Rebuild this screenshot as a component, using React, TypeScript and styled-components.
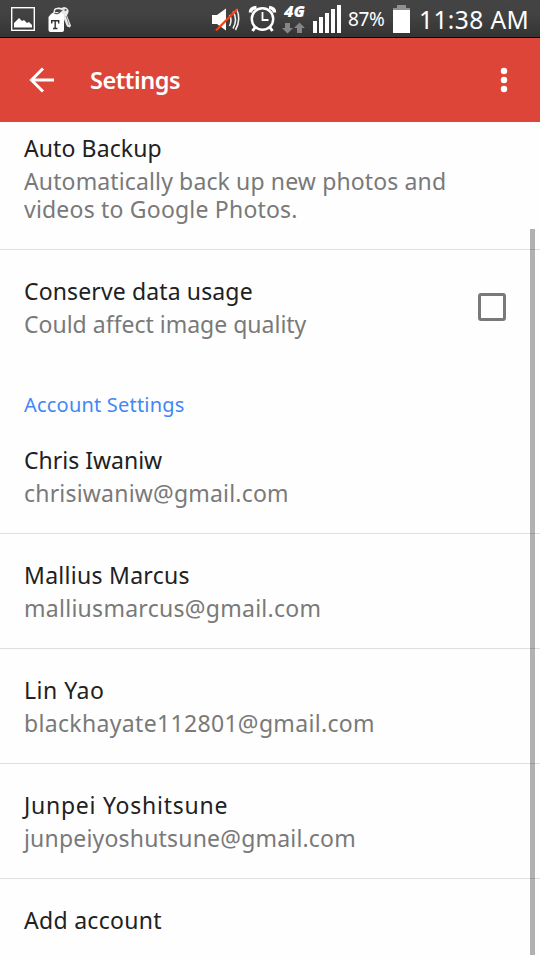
import React from "react";
import styled, { createGlobalStyle } from "styled-components";

const GlobalStyle = createGlobalStyle`
  * { box-sizing: border-box; }
  body { margin: 0; background: #fff; overflow: hidden; font-family: "Noto Sans", sans-serif; }
`;

const Screen = styled.div`
  position: relative;
  width: 540px;
  height: 960px;
  overflow: hidden;
  display: flex;
  flex-direction: column;
  background: #fefefe;
`;

const StatusBar = styled.header`
  flex: none;
  height: 38px;
  display: flex;
  justify-content: space-between;
  background: linear-gradient(#444 0, #424242 15px, #343434 37px);
  border-bottom: 1px solid #000;
  color: #fff;
`;

const StatusGroup = styled.div`
  display: flex;
`;

const StatusText = styled.span<{ $size: number; $width: number; $spacing: number }>`
  width: ${(p) => p.$width}px;
  font-size: ${(p) => p.$size}px;
  letter-spacing: ${(p) => p.$spacing}px;
  line-height: 39px;
  white-space: nowrap;
`;

const Toolbar = styled.div`
  flex: none;
  height: 84px;
  display: flex;
  align-items: center;
  background: #dd4538;
  color: #fff;
`;

const IconButton = styled.button<{ $width: number }>`
  width: ${(p) => p.$width}px;
  height: 84px;
  padding: 0;
  border: 0;
  background: none;
  display: flex;
  color: inherit;
`;

const Heading = styled.h1`
  flex: 1;
  margin: 0;
  font-size: 23.5px;
  font-weight: 600;
  line-height: 84px;
  letter-spacing: -0.45px;
`;

const List = styled.main`
  flex: 1;
  min-height: 0;
  overflow: hidden;
`;

const Row = styled.section<{ $top?: number; $divider?: boolean }>`
  display: flex;
  justify-content: space-between;
  padding: ${(p) => p.$top ?? 27}px 34px 26px 24px;
  border-bottom: ${(p) => (p.$divider ? "1px solid #dfdfdf" : "0")};
`;

const RowText = styled.div`
  display: flex;
  flex-direction: column;
  gap: 5px;
`;

const Line = styled.div<{ $spacing: number }>`
  font-size: 23px;
  line-height: 28px;
  letter-spacing: ${(p) => p.$spacing}px;
  white-space: nowrap;
`;

const Title = styled(Line)`
  color: #212121;
`;

const Summary = styled(Line)`
  color: #797979;
`;

const SectionLabel = styled.h2<{ $spacing: number }>`
  height: 55px;
  margin: 0;
  padding: 27px 24px 0;
  color: #4387f5;
  font-size: 20px;
  font-weight: 400;
  line-height: 28px;
  letter-spacing: ${(p) => p.$spacing}px;
`;

const Checkbox = styled.span`
  width: 28px;
  height: 28px;
  margin-top: 16px;
  border: 3px solid #797979;
  border-radius: 3px;
`;

const ScrollThumb = styled.div`
  position: absolute;
  top: 229px;
  right: 5px;
  width: 5px;
  height: 726px;
  background: rgba(0, 0, 0, 0.3);
`;

const NotificationIcons = () => (
  <svg width="80" height="37" viewBox="0 0 80 37">
    <rect x="11.7" y="7.7" width="22.6" height="22.6" fill="none" stroke="#fff" strokeWidth="1.4" />
    <path d="M14 27.500V23l5-5 3 3 2-1 3 3 2-1 3 3v2.500Z" fill="#fff" />
    <path d="M61 9q2-3 5-1.500 4 2 2 6l-1 2 4 10-1 2-3-1-5-12q-2-3-1-5.500Z" fill="#e8e8e8" />
    <circle cx="65.500" cy="10" r="1.100" fill="#555" />
    <path d="M66 16l3 9" stroke="#777" strokeWidth="0.8" />
    <path d="M51 14l3-2h7l3 3v15q0 2-2 2H50.500q-2 0-2-2V17Z" fill="#fff" />
    <path d="M54 12.500q3 3 7-1.500l2-2" fill="none" stroke="#555" strokeWidth="1.2" />
    <path d="M54.500 13q-1-4 2.500-4.500 3-.5 6 1" fill="none" stroke="#eee" strokeWidth="1.5" />
    <path d="M51.700 23.500V20.700h7v2.800M55.200 21v7.500M53 28.500h4.500" fill="none" stroke="#333" strokeWidth="1.4" />
  </svg>
);

const SystemIcons = () => (
  <svg width="142" height="37" viewBox="206 0 142 37">
    <path d="M212 15h5l9-6.500v22l-9-6.500h-5Z" fill="#fff" />
    <path d="M229.500 15q3 5 0 11M233 11.500q5 8 0 17M236.500 9q5 10-1 21" fill="none" stroke="#eee" strokeWidth="1.6" />
    <path d="M216 30.500L237 9.500" stroke="#ff3b10" strokeWidth="2.3" />
    <g fill="none" stroke="#fff">
      <circle cx="262.500" cy="19" r="10.700" strokeWidth="2.4" />
      <path d="M262.500 12v8h6" strokeWidth="1.8" />
      <path d="M250.500 12.500q0-4.500 6-5M269 7.500q5.500.5 5.500 5" strokeWidth="3.5" />
      <path d="M255 27.500l-2.500 3.500M270 27.500l2.500 3.500" strokeWidth="3" />
    </g>
    <text x="284" y="17" fill="#fff" fontFamily="Open Sans, sans-serif" fontSize="15" fontWeight="800" fontStyle="italic" textLength="21" lengthAdjust="spacingAndGlyphs">4G</text>
    <path d="M285 23h5v5h3l-5.500 5.500-5.500-5.500h3ZM297 33v-5h-3l5.500-5.500 5.500 5.500h-3v5Z" fill="#858585" />
    <path d="M313 21h4v12h-4ZM319 17h4v16h-4ZM325 13h4v20h-4ZM331 9h4v24h-4ZM337 5h4v28h-4Z" fill="#fff" />
  </svg>
);

const BatteryIcon = () => (
  <svg width="29" height="37" viewBox="0 0 29 37">
    <path d="M3 10V8h4V5h9v3h4v2Z" fill="#909090" />
    <path d="M3 10h17v23H3Z" fill="#fff" />
  </svg>
);

const accounts = [
  { name: "Chris Iwaniw", email: "chrisiwaniw@gmail.com", nameSpacing: 0, emailSpacing: 0.2 },
  { name: "Mallius Marcus", email: "malliusmarcus@gmail.com", nameSpacing: 0.28, emailSpacing: 0.28 },
  { name: "Lin Yao", email: "blackhayate112801@gmail.com", nameSpacing: 0.5, emailSpacing: 0.33 },
  { name: "Junpei Yoshitsune", email: "junpeiyoshutsune@gmail.com", nameSpacing: 0.75, emailSpacing: 0.19 },
];

export default function App() {
  return (
    <>
      <GlobalStyle />
      <Screen>
        <StatusBar>
          <NotificationIcons />
          <StatusGroup>
            <SystemIcons />
            <StatusText $size={19} $width={42} $spacing={-0.4}>87%</StatusText>
            <BatteryIcon />
            <StatusText $size={24.5} $width={121} $spacing={0.4}>11:38 AM</StatusText>
          </StatusGroup>
        </StatusBar>
        <Toolbar>
          <IconButton $width={90} aria-label="Back">
            <svg width="90" height="84" viewBox="0 0 90 84">
              <path d="M54 42H32M43 30.500L31.500 42 43 53.500" fill="none" stroke="#fff" strokeWidth="3" />
            </svg>
          </IconButton>
          <Heading>Settings</Heading>
          <IconButton $width={72} aria-label="More options">
            <svg width="72" height="84" viewBox="0 0 72 84" fill="#fff">
              <circle cx="36" cy="33" r="3.200" />
              <circle cx="36" cy="42" r="3.200" />
              <circle cx="36" cy="51" r="3.200" />
            </svg>
          </IconButton>
        </Toolbar>
        <List>
          <Row $top={12} $divider>
            <RowText>
              <Title $spacing={0.1}>Auto Backup</Title>
              <div>
                <Summary $spacing={0.13}>Automatically back up new photos and</Summary>
                <Summary $spacing={0.2}>videos to Google Photos.</Summary>
              </div>
            </RowText>
          </Row>
          <Row>
            <RowText>
              <Title $spacing={0.13}>Conserve data usage</Title>
              <Summary $spacing={0}>Could affect image quality</Summary>
            </RowText>
            <Checkbox role="checkbox" aria-checked="false" />
          </Row>
          <SectionLabel $spacing={0.2}>Account Settings</SectionLabel>
          {accounts.map((a) => (
            <Row key={a.email} $divider>
              <RowText>
                <Title $spacing={a.nameSpacing}>{a.name}</Title>
                <Summary $spacing={a.emailSpacing}>{a.email}</Summary>
              </RowText>
            </Row>
          ))}
          <Row>
            <Title $spacing={0.3}>Add account</Title>
          </Row>
        </List>
        <ScrollThumb />
      </Screen>
    </>
  );
}
